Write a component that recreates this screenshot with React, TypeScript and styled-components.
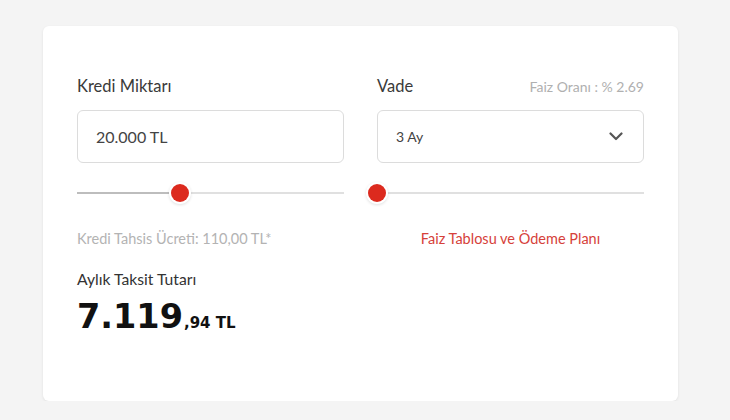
import React from "react";
import styled, { createGlobalStyle } from "styled-components";

const Global = createGlobalStyle`
  html, body { margin: 0; padding: 0; background: #f4f4f4; }
  body { font-family: Lato, "Noto Sans", sans-serif; }
`;

const Page = styled.div`
  padding: 26px 0 0 43px;
`;

const Card = styled.div`
  width: 635px;
  height: 375px;
  box-sizing: border-box;
  background: #fff;
  border-radius: 6px;
  box-shadow: 0 1px 3px rgba(0, 0, 0, 0.08);
  padding: 50px 34px 0 34px;
`;

const Grid = styled.div`
  display: grid;
  grid-template-columns: 267px 267px;
  column-gap: 33px;
`;

const Column = styled.div`
  display: flex;
  flex-direction: column;
`;

const LabelRow = styled.div`
  display: flex;
  justify-content: space-between;
  align-items: baseline;
  height: 22px;
  margin-bottom: 12px;
`;

const Label = styled.span`
  font-size: 16.5px;
  color: #3a3a3a;
`;

const Rate = styled.span`
  font-size: 14px;
  color: #b0b0b0;
`;

const Field = styled.div`
  height: 53px;
  box-sizing: border-box;
  border: 1px solid #dcdcdc;
  border-radius: 6px;
  display: flex;
  align-items: center;
  justify-content: space-between;
  padding: 0 20px 0 18px;
  color: #444;
`;

const FieldText = styled.span<{ $size: number }>`
  font-size: ${(p) => p.$size}px;
`;

const Slider = styled.div`
  position: relative;
  height: 18px;
  margin-top: 21px;
  display: flex;
  align-items: center;
`;

const Track = styled.div`
  flex: 1;
  height: 2px;
  background: #e0e0e0;
  position: relative;
`;

const Fill = styled.div`
  height: 2px;
  background: #bdbdbd;
`;

const Thumb = styled.div`
  position: absolute;
  top: 0;
  width: 18px;
  height: 18px;
  margin-left: -9px;
  border-radius: 50%;
  background: #dc2a1e;
  box-shadow: 0 0 0 2px #fff, 0 1px 3px 2px rgba(0, 0, 0, 0.12);
`;

const Note = styled.div<{ $center?: boolean; $red?: boolean }>`
  margin-top: 28px;
  font-size: 14.5px;
  color: ${(p) => (p.$red ? "#d6413a" : "#b3b3b3")};
  text-align: ${(p) => (p.$center ? "center" : "left")};
`;

const Summary = styled.div`
  margin-top: 23px;
`;

const SummaryLabel = styled.div`
  font-size: 15.7px;
  color: #333;
`;

const Amount = styled.div`
  margin-top: 9px;
  font-family: "DejaVu Sans", sans-serif;
  font-weight: bold;
  color: #111;
  display: flex;
  align-items: baseline;
`;

const Big = styled.span`
  font-size: 33.5px;
`;

const Small = styled.span`
  font-size: 15px;
  margin-left: 1px;
`;

const Chevron = () => (
  <svg width="14" height="9" viewBox="0 0 14 9">
    <path d="M1.5 1.5 L7 7 L12.5 1.5" fill="none" stroke="#555" strokeWidth="2.2" strokeLinecap="round" strokeLinejoin="round" />
  </svg>
);

const RangeSlider = ({ percent }: { percent: number }) => (
  <Slider>
    <Track>
      <Fill style={{ width: `${percent}%` }} />
    </Track>
    <Thumb style={{ left: `${percent}%` }} />
  </Slider>
);

export default function App() {
  return (
    <>
      <Global />
      <Page>
        <Card>
          <Grid>
            <Column>
              <LabelRow>
                <Label>Kredi Miktarı</Label>
              </LabelRow>
              <Field>
                <FieldText $size={16}>20.000 TL</FieldText>
              </Field>
              <RangeSlider percent={38.5} />
              <Note>Kredi Tahsis Ücreti: 110,00 TL*</Note>
            </Column>
            <Column>
              <LabelRow>
                <Label>Vade</Label>
                <Rate>Faiz Oranı : % 2.69</Rate>
              </LabelRow>
              <Field>
                <FieldText $size={14}>3 Ay</FieldText>
                <Chevron />
              </Field>
              <RangeSlider percent={0} />
              <Note $center $red>Faiz Tablosu ve Ödeme Planı</Note>
            </Column>
          </Grid>
          <Summary>
            <SummaryLabel>Aylık Taksit Tutarı</SummaryLabel>
            <Amount>
              <Big>7.119</Big>
              <Small>,94 TL</Small>
            </Amount>
          </Summary>
        </Card>
      </Page>
    </>
  );
}
